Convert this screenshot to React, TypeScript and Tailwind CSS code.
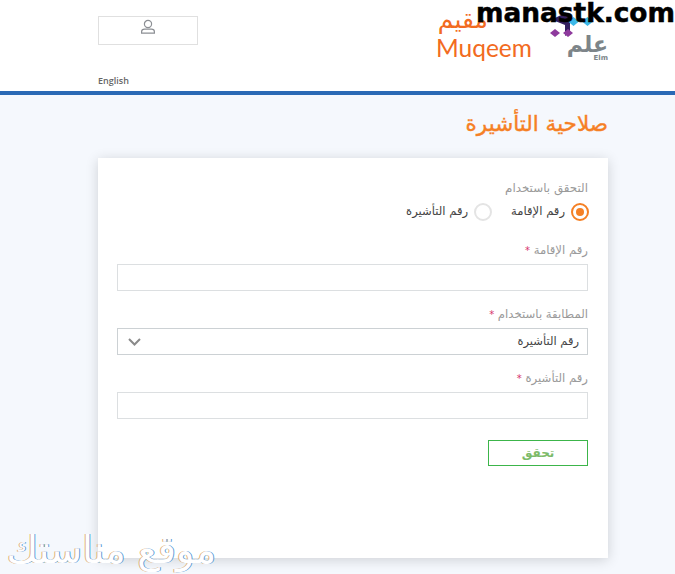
const sans = "font-['DejaVu_Sans','Noto_Sans',sans-serif]";

function Field({ label, star, children, mt }: { label: string; star?: boolean; children: React.ReactNode; mt: string }) {
  return (
    <div className={mt}>
      <div dir="rtl" className="h-[17px] text-[11.7px] leading-[17px] text-[#9a9a9a]">
        {label} {star && <span className="text-[10px] text-[#d6336c]">*</span>}
      </div>
      {children}
    </div>
  );
}

export default function App() {
  return (
    <div className={`relative h-[574px] w-[675px] overflow-hidden bg-[#f5f8fd] ${sans}`}>
      <header className="flex h-[95px] justify-between border-b-4 border-[#2a69b5] bg-white pl-[98px] pr-[67px]">
        <div className="flex w-[100px] flex-col pt-4">
          <div className="flex h-[29px] justify-center border border-[#e0e0e0] pt-0.5">
            <svg width="16" height="16" viewBox="0 0 16 16" fill="none" stroke="#8c8f94" strokeWidth="1.2">
              <circle cx="8" cy="5" r="3.6" />
              <path d="M1.6 14.2v-1.4c0-1.6 1.4-2.6 3-2.6h6.8c1.6 0 3 1 3 2.6v1.4z" />
            </svg>
          </div>
          <div className="mt-[30px] font-['Open_Sans',sans-serif] text-[9px] leading-[12px] font-semibold text-[#666]">English</div>
        </div>
        <div className="flex items-start pt-[7px]">
          <div className="flex w-[96px] flex-col items-start">
            <div dir="rtl" className="h-[25px] w-[52px] text-[25px] leading-[25px] text-[#f26b21]">مقيم</div>
            <div className="mt-[1px] font-['Lato',sans-serif] text-[24.5px] leading-[30px] text-[#f26b21]">Muqeem</div>
          </div>
          <div className="ml-[18px] flex w-[58px] flex-col pt-[6px]">
            <svg width="44" height="24" viewBox="0 0 44 24" className="shrink-0">
              <path d="M5 5l8-4 7 3v15l-5 4v-11l-10-4z" fill="#33205f" />
              <path d="M0 20l5-4 5 4-5 4zM13 20l5-4 5 4-5 4z" fill="#8e3a9d" />
              <path d="M18 8.500l5.500-4.500 5.500 4.500-5.500 4.500zM32 8.500l5.500-4.500 5.500 4.500-5.500 4.500z" fill="#3db9e8" />
            </svg>
            <div dir="rtl" className="h-[16px] w-[58px] text-[22px] leading-[16px] font-bold text-[#7d8589]">علم</div>
            <div dir="rtl" className="mt-[1px] w-[58px] text-[7px] leading-[8px] font-bold text-[#7d8589]">Elm</div>
          </div>
        </div>
      </header>

      <main className="pl-[98px] pr-[67px]">
        <h1 dir="rtl" className="h-[63px] pt-[14px] text-[21.5px] leading-[30px] font-normal text-[#f58025] [-webkit-text-stroke:0.4px_#f58025]">صلاحية التأشيرة</h1>
        <section className="h-[400px] bg-white pr-5 pl-[19px] pt-[22px] shadow-[0_2px_12px_rgba(0,0,0,0.16)]">
          <div dir="rtl" className="h-[17px] text-[11.9px] leading-[17px] text-[#9a9a9a]">التحقق باستخدام</div>
          <div dir="rtl" className="mt-[6px] -mr-px flex h-[18px] items-center text-[11.6px] text-[#444]">
            <span className="flex h-[18px] w-[18px] items-center justify-center rounded-full border-2 border-[#f58025]">
              <span className="h-2 w-2 rounded-full bg-[#f58025]" />
            </span>
            <span className="mr-[6px]">رقم الإقامة</span>
            <span className="mr-[19px] h-[18px] w-[18px] rounded-full border-2 border-[#e4e4e4]" />
            <span className="mr-[6px]">رقم التأشيرة</span>
          </div>

          <Field label="رقم الإقامة" star mt="mt-[21px]">
            <div className="mt-[5px] h-[27px] border border-[#dcdfe1] bg-white" />
          </Field>
          <Field label="المطابقة باستخدام" star mt="mt-[15px]">
            <div className="mt-[5px] flex h-[27px] items-center justify-between border border-[#ccd1d4] bg-white pr-2 pl-[10px]">
              <svg width="13" height="8" viewBox="0 0 13 8" fill="none" stroke="#8a8a8a" strokeWidth="2">
                <path d="M1 1l5.5 5.5L12 1" />
              </svg>
              <span dir="rtl" className="text-[11.5px] text-[#444]">رقم التأشيرة</span>
            </div>
          </Field>
          <Field label="رقم التأشيرة" star mt="mt-[15px]">
            <div className="mt-[5px] h-[27px] border border-[#dcdfe1] bg-white" />
          </Field>
          <div className="mt-[21px] flex justify-end">
            <button className="h-[26px] w-[100px] border border-[#3cb54a] bg-white text-[12px] font-bold text-[#7dbb6a]">تحقق</button>
          </div>
        </section>
      </main>

      <div className="absolute top-0 right-0 text-[26.4px] leading-[25px] font-bold whitespace-nowrap text-black [-webkit-text-stroke:0.5px_black]">manastk.com</div>
      <div dir="rtl" className="absolute top-[526px] left-[6px] w-[210px] text-[38px] leading-[48px] whitespace-nowrap text-white [text-shadow:1px_0_0_#5a9bd8,-1px_0_0_#e3b27a]">موقع مناستك</div>
    </div>
  );
}
